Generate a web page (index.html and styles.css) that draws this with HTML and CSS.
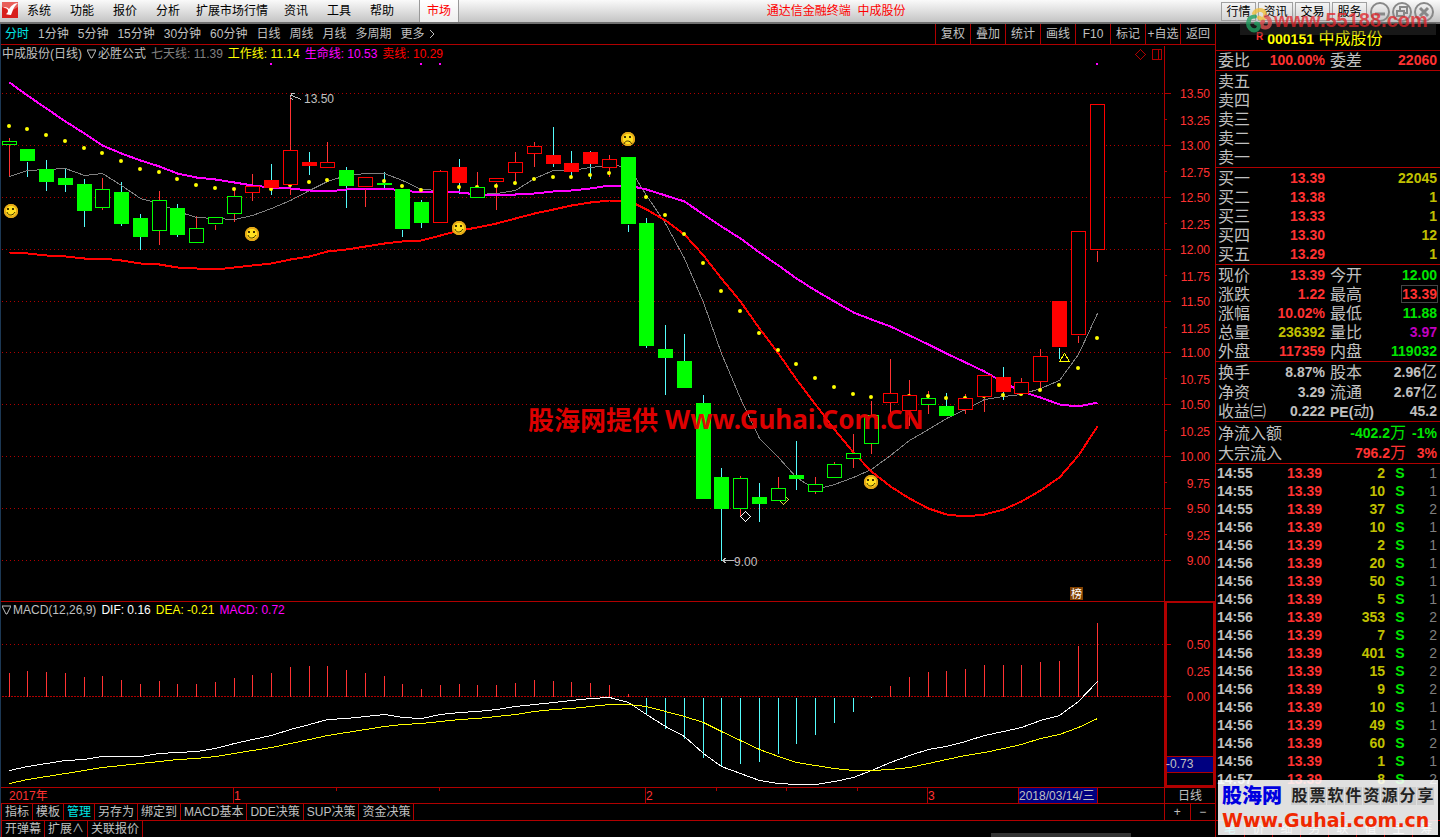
FILE: index.html
```html
<!DOCTYPE html>
<html lang="zh-CN">
<head>
<meta charset="utf-8">
<title>通达信金融终端 中成股份</title>
<link rel="stylesheet" href="styles.css">
</head>
<body>
<header class="menubar">
  <svg class="logo" viewBox="0 0 16 16" aria-hidden="true"><rect width="16" height="16" fill="#d8201c"/><path d="M0 0h16v5L9 9 0 5z" fill="#e8605a"/><path d="M1 5c2 0 4 0 6 2 2-3 5-6 9-6-4 3-5 7-7 12-3 0-5-1-5-1s2-1 2-3c0-3-3-3-5-4z" fill="#fff"/></svg>
  <nav class="menus">
    <button>系统</button><button>功能</button><button>报价</button><button>分析</button><button class="wide">扩展市场行情</button><button>资讯</button><button>工具</button><button>帮助</button>
  </nav>
  <button class="market">市场</button>
  <h1 class="title">通达信金融终端&nbsp; 中成股份</h1>
  <div class="quick"><button>行情</button><button>资讯</button><button>交易</button><button>服务</button></div>
  <div class="winbtns">
    <button aria-label="最小化"><svg viewBox="0 0 20 20"><circle cx="10" cy="10" r="9"/><path d="M5 12h10" class="thick"/></svg></button>
    <button aria-label="还原"><svg viewBox="0 0 20 20"><circle cx="10" cy="10" r="9"/><path d="M8 8V5h7v6h-3M5 9h7v5H5z"/></svg></button>
    <button aria-label="关闭"><svg viewBox="0 0 20 20"><circle cx="10" cy="10" r="9"/><path d="M6 6l8 8M14 6l-8 8" class="thick"/></svg></button>
  </div>
  <div class="stamp-top" aria-hidden="true">
    <div class="stamp-band"></div>
    <svg class="swirl" viewBox="0 0 26 26" fill="none" stroke-width="4" stroke-linecap="round"><path d="M8 6c3-6 13-4 11 3-1 3-4 3-6 1" stroke="#f0c040"/><path d="M20 9c6 3 5 12-1 11-4 0-4-4-2-6" stroke="#e05050"/><path d="M3 13c-3 6 3 12 8 9 3-2 2-6-1-6" stroke="#20a060"/><path d="M9 9c-5 0-7 3-6 6" stroke="#20a060"/></svg>
    <span class="stamp-url">www.55188.com</span>
  </div>
</header>

<main class="terminal">
<section class="left">
  <div class="toolbar">
    <nav class="periods">
      <button class="on">分时</button><button>1分钟</button><button>5分钟</button><button>15分钟</button><button>30分钟</button><button>60分钟</button><button>日线</button><button>周线</button><button>月线</button><button>多周期</button><button class="more">更多<svg viewBox="0 0 6 10"><path d="M1 1l4 4-4 4"/></svg></button>
    </nav>
    <div class="actions"><button>复权</button><button>叠加</button><button>统计</button><button>画线</button><button>F10</button><button>标记</button><button>+自选</button><button>返回</button></div>
  </div>

  <div class="panel">
    <div class="legend"><span>中成股份(日线)</span><svg class="tri" viewBox="0 0 9 10"><path d="M0 1h9L5 9H4z"/></svg><span class="ind">必胜公式</span><span class="c-dim">七天线: 11.39</span><span class="c-yellow">工作线: 11.14</span><span class="c-magenta">生命线: 10.53</span><span class="c-red">卖线: 10.29</span></div>
    <svg class="plot" viewBox="0 45 1215 556" role="img" aria-label="日K线图">
      <defs>
        <g id="face"><circle r="7" fill="#ffe020"/><circle r="6" fill="none" stroke="#e8a818" stroke-width="2"/><circle r="5" fill="#ffe020"/><path d="M-3-3v2M2-3v2" stroke="#403000" stroke-width="2"/></g>
        <g id="smile"><use href="#face"/><path d="M-4 1c1 4 6 4 8 0" fill="none" stroke="#403000"/></g>
        <g id="frown"><use href="#face"/><path d="M-4 5c1-4 6-4 8 0" fill="none" stroke="#403000"/></g>
      </defs>
      <g transform="translate(0 .5)">
        <path class="grid" d="M2 93H1164M2 145H1164M2 197H1164M2 249H1164M2 301H1164M2 352H1164M2 404H1164M2 456H1164M2 508H1164M2 560H1164"/>
      </g>
      <g class="crisp" transform="translate(.5 .5)">
        <path class="frame" d="M1164 45V601M1164 93h6M1164 145h6M1164 197h6M1164 249h6M1164 301h6M1164 352h6M1164 404h6M1164 456h6M1164 508h6M1164 560h6M1164 119h2M1164 171h2M1164 223h2M1164 275h2M1164 327h2M1164 378h2M1164 430h2M1164 482h2M1164 534h2"/>
        <path class="frame" d="M1140 49l5 5-5 5-5-5zM1152 49h9v10h-9zM1158 49v10"/>
        <path class="wick-up" d="M9 137V176M102 177V209M159 190V244M196 215V228M215 224V229M234 189V221M252 173V200M290 95V194M327 141V162M365 187V206M440 169V171M477 171V187M496 182V209M515 151V183M534 141V166M609 154V176M740 475V515M778 476V488M815 476V493M834 461V464M853 433V467M871 400V453M890 358V413M909 379V425M928 390V413M965 393V413M984 397V411M1021 377V382M1040 348V390M1078 335V342M1097 250V261"/>
        <path class="wick-down" d="M27 161V176M46 159V190M65 167V191M84 178V226M121 181V225M140 213V249M177 203V236M271 163V194M309 151V174M346 166V207M384 171V187M402 229V236M421 199V227M459 158V193M553 126V166M571 150V177M590 150V178M628 224V231M646 217V347M665 324V394M684 333V361M703 394V403M721 467V560M759 482V521M796 440V489M946 392V406M1003 366V399M1059 347V358"/>
        <path class="ma7" d="M9 176L27 170 46 169 65 168 84 175 102 173 121 185 140 198 159 203 177 211 196 217 215 218 234 219 252 215 271 208 290 200 309 190 327 181 346 175 365 173 384 173 402 180 421 189 440 190 459 192 477 194 496 193 515 190 534 178 553 170 571 170 590 167 609 165 628 166 646 195 665 223 684 258 703 302 721 353 740 398 759 438 778 457 796 477 815 489 834 484 853 477 871 469 890 455 909 440 928 429 946 418 965 409 984 399 1003 396 1021 394 1040 388 1059 380 1078 354 1097 313"/>
        <path class="life" d="M9 82L27 95 46 108 65 121 84 133 102 145 121 153 140 160 159 166 177 173 196 177 215 179 234 182 252 185 271 187 290 188 309 190 327 191 346 189 365 188 384 188 402 190 421 192 440 191 459 192 477 194 515 194 534 193 553 191 571 190 590 188 609 185 628 185 646 189 665 195 684 201 703 214 721 226 740 238 759 252 778 265 796 278 815 290 834 301 853 312 871 319 890 326 909 335 928 344 946 353 965 362 984 371 1003 382 1021 391 1040 397 1059 404 1078 406 1097 402"/>
        <path class="sell" d="M9 252L27 253 46 255 65 256 84 258 102 258 121 260 140 263 159 264 177 267 196 268 215 269 234 267 252 265 271 263 290 259 309 256 327 251 346 249 365 246 384 243 402 241 421 240 440 235 459 230 477 227 496 223 515 218 534 213 553 209 571 205 590 202 609 200 628 200 646 209 665 220 684 234 703 255 721 278 740 301 759 328 778 353 796 379 815 404 834 429 853 452 871 471 890 486 909 498 928 508 946 514 965 516 984 514 1003 509 1021 501 1040 490 1059 477 1078 455 1097 426"/>
      </g>
      <path class="dots" d="M9 126h0M27 129h0M46 135h0M65 141h0M84 148h0M102 153h0M121 161h0M140 169h0M159 172h0M177 179h0M196 185h0M215 188h0M234 189h0M271 189h0M290 185h0M309 182h0M327 180h0M384 181h0M402 186h0M421 190h0M459 187h0M477 187h0M496 186h0M515 183h0M534 179h0M553 177h0M571 177h0M590 175h0M609 173h0M646 197h0M665 215h0M684 234h0M703 263h0M721 291h0M740 311h0M759 333h0M778 350h0M796 364h0M815 378h0M834 387h0M853 394h0M871 397h0M909 396h0M928 396h0M946 398h0M965 398h0M984 396h0M1003 395h0M1021 394h0M1040 390h0M1059 385h0M1078 368h0M1097 338h0"/>
      <g class="crisp" transform="translate(.5 .5)">
        <path class="mark-buy" d="M783 494l5 5-5 5-5-5z"/>
        <path class="body-down" d="M20 149h14v11h-14zM39 169h14v12h-14zM58 178h14v6h-14zM77 184h14v26h-14zM114 192h14v31h-14zM133 218h14v18h-14zM170 208h14v26h-14zM339 170h14v15h-14zM377 183h14v1h-14zM395 189h14v39h-14zM414 202h14v20h-14zM621 157h14v66h-14zM639 223h14v122h-14zM658 349h14v8h-14zM677 361h14v26h-14zM696 403h14v95h-14zM714 477h14v31h-14zM752 497h14v6h-14zM789 475h14v3h-14zM939 406h14v9h-14z"/>
        <path class="hollow-down" d="M2 141h14v3h-14zM95 189h14v18h-14zM152 200h14v30h-14zM189 228h14v14h-14zM208 217h14v6h-14zM227 196h14v17h-14zM470 187h14v10h-14zM733 478h14v30h-14zM771 488h14v12h-14zM808 484h14v7h-14zM827 464h14v13h-14zM846 453h14v5h-14zM864 415h14v28h-14zM921 398h14v6h-14z"/>
        <path class="body-up" d="M264 180h14v7h-14zM302 162h14v3h-14zM452 167h14v15h-14zM546 155h14v8h-14zM564 163h14v8h-14zM583 152h14v11h-14zM996 377h14v14h-14zM1052 301h14v45h-14z"/>
        <path class="hollow-up" d="M245 186h14v6h-14zM283 150h14v34h-14zM320 162h14v5h-14zM358 177h14v9h-14zM433 171h14v51h-14zM489 178h14v3h-14zM508 162h14v10h-14zM527 146h14v7h-14zM602 159h14v8h-14zM883 393h14v9h-14zM902 395h14v15h-14zM958 398h14v11h-14zM977 375h14v21h-14zM1014 382h14v11h-14zM1033 356h14v25h-14zM1071 231h14v103h-14zM1090 104h14v145h-14z"/>
        <path class="mark-low" d="M745 511l5 5-5 5-5-5z"/>
        <path class="mark-warn" d="M1064 353l5 8h-10z"/>
        <path class="pointer" d="M291 95l10 4M290 97l1-4h3M290 98l3 1M722 560h11M726 557l-4 3 4 3"/>
      </g>
      <path fill="#f0f" d="M270 63h2v2h-2zM420 63h2v2h-2zM439 63h2v2h-2zM1096 63h2v2h-2z"/>
      <use href="#smile" x="11" y="211"/><use href="#smile" x="252" y="234"/><use href="#smile" x="459" y="228"/><use href="#smile" x="871" y="482"/><use href="#frown" x="628" y="139"/>
      <g class="note"><text x="304" y="103">13.50</text><text x="734" y="566">9.00</text></g>
      <rect x="1070" y="587" width="13" height="13" fill="#804000"/><text class="rank" x="1071" y="598">榜</text>
      <g class="scale">
        <text x="1210" y="98">13.50</text><text x="1210" y="125">13.25</text><text x="1210" y="150">13.00</text><text x="1210" y="177">12.75</text><text x="1210" y="202">12.50</text><text x="1210" y="229">12.25</text><text x="1210" y="254">12.00</text><text x="1210" y="281">11.75</text><text x="1210" y="306">11.50</text><text x="1210" y="333">11.25</text><text x="1210" y="357">11.00</text><text x="1210" y="384">10.75</text><text x="1210" y="409">10.50</text><text x="1210" y="436">10.25</text><text x="1210" y="461">10.00</text><text x="1210" y="488">9.75</text><text x="1210" y="513">9.50</text><text x="1210" y="540">9.25</text><text x="1210" y="565">9.00</text>
      </g>
    </svg>
    <div class="stamp-mid"><span class="cn">股海网提供</span><span>Www.Guhai.Com.CN</span></div>
  </div>

  <div class="panel">
    <div class="legend"><svg class="tri" viewBox="0 0 9 10"><path d="M0 1h9L5 9H4z"/></svg><span class="ind">MACD(12,26,9)</span><span class="c-white">DIF: 0.16</span><span class="c-yellow">DEA: -0.21</span><span class="c-magenta">MACD: 0.72</span></div>
    <svg class="plot" viewBox="0 601 1215 186" role="img" aria-label="MACD">
      <g transform="translate(0 .5)">
        <path class="grid" d="M2 644H1164"/><path class="zero" d="M2 696H1164"/>
      </g>
      <g class="crisp" transform="translate(.5 .5)">
        <path class="frame" d="M0 601H1214M1164 601V787M1164 644h6M1164 670h2M1164 696h6"/>
        <path class="wick-up" d="M9 672V696M27 670V696M46 671V696M65 672V696M84 676V696M102 675V696M121 679V696M140 683V696M159 680V696M177 683V696M196 683V696M215 681V696M234 677V696M252 674V696M271 672V696M290 666V696M309 665V696M327 665V696M346 669V696M365 672V696M384 675V696M402 683V696M421 688V696M440 684V696M459 683V696M477 684V696M496 684V696M515 682V696M534 679V696M553 680V696M571 681V696M590 682V696M609 684V696M628 693V696M890 685V696M909 676V696M928 671V696M946 670V696M965 668V696M984 664V696M1003 664V696M1021 664V696M1040 661V696M1059 660V696M1078 645V696M1097 622V696"/>
        <path class="wick-down" d="M646 697V714M665 697V728M684 697V738M703 697V757M721 697V766M740 697V763M759 697V761M778 697V753M796 697V743M815 697V734M834 697V722M853 697V711M871 696V697"/>
        <path class="dif" d="M9 770L27 766 46 763 65 760 84 759 102 756 140 756 159 753 177 752 196 751 215 748 234 743 252 739 271 735 290 729 309 724 327 719 346 718 365 716 384 714 402 717 421 718 440 714 459 712 477 711 496 709 515 706 534 704 553 702 571 700 590 698 609 697 628 702 646 714 665 726 684 736 703 753 721 766 740 773 759 780 778 783 796 784 815 784 834 781 853 777 871 770 890 762 909 755 928 749 946 746 965 741 984 735 1003 731 1021 727 1040 720 1059 715 1078 701 1097 681"/>
        <path class="dea" d="M9 783L27 779 46 776 65 773 84 770 102 767 121 765 140 763 159 761 177 759 196 758 215 756 234 753 252 750 271 747 290 743 309 739 327 735 346 732 365 729 384 726 402 724 421 723 440 721 459 719 477 718 496 716 515 714 534 711 553 709 571 708 590 706 609 704 628 704 646 706 665 711 684 716 703 722 721 731 740 740 759 749 778 756 796 762 815 765 834 768 853 770 871 770 890 769 909 767 928 763 946 759 965 755 984 752 1003 748 1021 744 1040 738 1059 734 1078 727 1097 718"/>
        <rect x="1165" y="756" width="49" height="16" fill="#000080" stroke="#b00000"/>
      </g>
      <rect x="1166" y="602" width="48" height="184" fill="none" stroke="#b00000" stroke-width="2"/>
      <g class="scale"><text x="1210" y="649">0.50</text><text x="1210" y="676">0.25</text><text x="1210" y="701">0.00</text></g>
      <text class="cursor" x="1166" y="768">-0.73</text>
    </svg>
  </div>

  <div class="daterow">
    <svg class="plot" viewBox="0 787 1164 16" role="img" aria-label="日期轴">
      <g class="crisp" transform="translate(.5 .5)">
        <path class="frame" d="M0 787H1164M233 787v16M645 787v16M927 787v16M336 787v3M439 787v3M716 787v3M786 787v3M857 787v3"/>
        <rect x="1018" y="787" width="79" height="16" fill="#000080" stroke="#b00000"/>
      </g>
      <g class="dates"><text x="9" y="800">2017年</text><text x="234" y="800">1</text><text x="646" y="800">2</text><text x="928" y="800">3</text></g>
      <text class="cursor" x="1019" y="800">2018/03/14/三</text>
    </svg>
    <button class="cycle">日线</button>
  </div>
  <div class="tabs">
    <div class="tablist"><button>指标</button><button>模板</button><button class="on">管理</button><button>另存为</button><button>绑定到</button><button>MACD基本</button><button>DDE决策</button><button>SUP决策</button><button>资金决策</button></div>
    <div class="zoomers"><button>+</button><button>−</button></div>
  </div>
  <div class="tabs">
    <div class="tablist"><button>开弹幕</button><button>扩展∧</button><button>关联报价</button></div>
  </div>
  <div class="thumb"></div>
</section>

<aside class="quote">
  <h2 class="stock"><small>R</small><b>000151</b> 中成股份</h2>
  <table class="grid4 ratio"><tr><th>委比</th><td class="c-up">100.00%</td><th>委差</th><td class="c-up">22060</td></tr></table>
  <table class="book"><tr><th>卖五</th><td></td><td></td></tr><tr><th>卖四</th><td></td><td></td></tr><tr><th>卖三</th><td></td><td></td></tr><tr><th>卖二</th><td></td><td></td></tr><tr><th>卖一</th><td></td><td></td></tr></table>
  <table class="book"><tr><th>买一</th><td class="c-up">13.39</td><td class="c-vol">22045</td></tr><tr><th>买二</th><td class="c-up">13.38</td><td class="c-vol">1</td></tr><tr><th>买三</th><td class="c-up">13.33</td><td class="c-vol">1</td></tr><tr><th>买四</th><td class="c-up">13.30</td><td class="c-vol">12</td></tr><tr><th>买五</th><td class="c-up">13.29</td><td class="c-vol">1</td></tr></table>
  <table class="grid4">
    <tr><th>现价</th><td class="c-up">13.39</td><th>今开</th><td class="c-down">12.00</td></tr>
    <tr><th>涨跌</th><td class="c-up">1.22</td><th>最高</th><td class="c-up"><span class="boxed">13.39</span></td></tr>
    <tr><th>涨幅</th><td class="c-up">10.02%</td><th>最低</th><td class="c-down">11.88</td></tr>
    <tr><th>总量</th><td class="c-vol">236392</td><th>量比</th><td class="c-purple">3.97</td></tr>
    <tr><th>外盘</th><td class="c-up">117359</td><th>内盘</th><td class="c-down">119032</td></tr>
  </table>
  <table class="grid4 basics">
    <tr><th>换手</th><td>8.87%</td><th>股本</th><td>2.96<i>亿</i></td></tr>
    <tr><th>净资</th><td>3.29</td><th>流通</th><td>2.67<i>亿</i></td></tr>
    <tr><th>收益㈢</th><td>0.222</td><th><b>PE(</b>动<b>)</b></th><td>45.2</td></tr>
  </table>
  <table class="flow"><tr><th>净流入额</th><td class="c-down">-402.2<i>万</i></td><td class="c-down">-1%</td></tr><tr><th>大宗流入</th><td class="c-up">796.2<i>万</i></td><td class="c-up">3%</td></tr></table>
  <table class="ticks">
    <tr><td>14:55</td><td>13.39</td><td>2</td><td>S</td><td>1</td></tr>
    <tr><td>14:55</td><td>13.39</td><td>10</td><td>S</td><td>1</td></tr>
    <tr><td>14:55</td><td>13.39</td><td>37</td><td>S</td><td>2</td></tr>
    <tr><td>14:56</td><td>13.39</td><td>10</td><td>S</td><td>1</td></tr>
    <tr><td>14:56</td><td>13.39</td><td>2</td><td>S</td><td>1</td></tr>
    <tr><td>14:56</td><td>13.39</td><td>20</td><td>S</td><td>1</td></tr>
    <tr><td>14:56</td><td>13.39</td><td>50</td><td>S</td><td>1</td></tr>
    <tr><td>14:56</td><td>13.39</td><td>5</td><td>S</td><td>1</td></tr>
    <tr><td>14:56</td><td>13.39</td><td>353</td><td>S</td><td>2</td></tr>
    <tr><td>14:56</td><td>13.39</td><td>7</td><td>S</td><td>2</td></tr>
    <tr><td>14:56</td><td>13.39</td><td>401</td><td>S</td><td>2</td></tr>
    <tr><td>14:56</td><td>13.39</td><td>15</td><td>S</td><td>2</td></tr>
    <tr><td>14:56</td><td>13.39</td><td>9</td><td>S</td><td>2</td></tr>
    <tr><td>14:56</td><td>13.39</td><td>10</td><td>S</td><td>1</td></tr>
    <tr><td>14:56</td><td>13.39</td><td>49</td><td>S</td><td>1</td></tr>
    <tr><td>14:56</td><td>13.39</td><td>60</td><td>S</td><td>2</td></tr>
    <tr><td>14:56</td><td>13.39</td><td>1</td><td>S</td><td>1</td></tr>
    <tr><td>14:57</td><td>13.39</td><td>8</td><td>S</td><td>2</td></tr>
  </table>
  <nav class="sidetabs"><button class="on">笔</button><button>价</button><button>细</button><button>势</button><button>联</button><button>值</button><button>主</button><button>筹</button></nav>
  <div class="stamp-bottom">
    <div class="stamp-line"><strong>股海网</strong><span class="slogan"><span>股</span><span>票</span><span>软</span><span>件</span><span>资</span><span>源</span><span>分</span><span>享</span></span></div>
    <div class="stamp-site">Www.Guhai.com.cn</div>
  </div>
</aside>
</main>
</body>
</html>
```
FILE: styles.css
```css
* { box-sizing: border-box; }
body {
  margin: 0;
  background: #000;
  color: #c0c0c0;
  font: 12px/16px "Liberation Sans", "Noto Sans CJK SC", sans-serif;
}
button {
  margin: 0;
  padding: 0;
  border: 0;
  background: none;
  color: inherit;
  font: inherit;
  white-space: nowrap;
}
svg { display: block; }

/* colours */
.c-dim { color: #808080; }
.c-yellow { color: #ff0; }
.c-magenta { color: #f0f; }
.c-red { color: #f00; }
.c-white { color: #fff; }
.c-up { color: #ff3232; }
.c-down { color: #00e600; }
.c-vol { color: #c0c000; }
.c-purple { color: #c000c0; }

/* menu bar */
.menubar {
  position: relative;
  display: flex;
  height: 24px;
  padding-left: 2px;
  background: linear-gradient(#fafafa, #c4c4c4);
  border-bottom: 2px solid #707070;
  color: #000;
}
.logo { width: 16px; height: 16px; margin-top: 2px; }
.menus { display: flex; gap: 1px; }
.menus button { padding: 0 9px; }
.menus .wide { padding: 0 6px; }
.market {
  width: 40px;
  margin-left: 16px;
  border: solid #999;
  border-width: 0 1px;
  background: linear-gradient(#fff, #eee);
  color: #f00;
}
.title {
  flex: 1;
  margin: 0;
  padding-right: 8px;
  color: #f00;
  font: inherit;
  line-height: 22px;
  text-align: center;
}
.quick { display: flex; gap: 2px; padding: 2px 3px 1px 0; }
.quick button {
  width: 35px;
  border: 1px solid #a0a0a0;
  background: linear-gradient(#f4f4f4, #d4d4d4);
}
.winbtns { display: flex; gap: 2px; padding: 1px 6px 0 0; }
.winbtns svg { width: 20px; height: 20px; fill: none; stroke: #888; stroke-width: 2; }
.winbtns .thick { stroke-width: 3; }
.stamp-top { position: absolute; top: 7px; right: 4px; width: 196px; height: 28px; z-index: 2; }
.stamp-band { position: absolute; inset: 16px 0 0 0; background: rgba(60, 60, 60, .4); }
.swirl { position: absolute; left: 6px; top: 0; width: 26px; height: 27px; opacity: .8; }
.stamp-url {
  position: absolute;
  left: 34px;
  top: 0;
  color: rgba(225, 35, 40, .75);
  font: bold 20px/26px "Liberation Sans", sans-serif;
}

/* layout */
.terminal { display: grid; grid-template-columns: minmax(0, 1fr) 225px; }
.left { position: relative; display: flex; flex-direction: column; }
.left::before {
  content: "";
  position: absolute;
  inset: 0 auto 0 0;
  width: 1px;
  background: #1c3854;
  z-index: 1;
}
.toolbar {
  display: flex;
  justify-content: space-between;
  height: 21px;
  border-bottom: 1px solid #b00000;
}
.periods { display: flex; gap: 9px; padding-left: 5px; }
.periods .on, .tabs .on, .sidetabs .on { color: #00e6e6; }
.more { display: flex; align-items: center; gap: 4px; }
.more svg { width: 6px; height: 10px; fill: none; stroke: #c0c0c0; }
.actions { display: flex; }
.actions button { width: 35px; border-left: 1px solid #b00000; }

/* chart panels */
.panel { position: relative; }
.plot { width: 100%; height: auto; }
.legend { position: absolute; top: 1px; left: 2px; display: flex; gap: 5px; }
.legend .ind { margin-left: -3px; }
.legend .tri { width: 9px; height: 10px; margin-top: 3px; fill: none; stroke: #c0c0c0; }
.grid { fill: none; stroke: #b00000; stroke-dasharray: 1 3; }
.zero { fill: none; stroke: #b00000; stroke-dasharray: 2 1; }
.crisp { shape-rendering: crispEdges; }
.crisp path { fill: none; }
.frame { stroke: #b00000; }
.wick-up { stroke: #ff3232; }
.wick-down { stroke: #54fcfc; }
.ma7 { stroke: #808080; }
.life { stroke: #f0f; stroke-width: 2; }
.sell { stroke: #f00; stroke-width: 2; }
.dif { stroke: #fff; }
.dea { stroke: #ff0; }
.dots { fill: none; stroke: #ff0; stroke-width: 4; stroke-linecap: round; }
.crisp .body-down { fill: #0f0; stroke: #0f0; }
.crisp .body-up { fill: #f00; stroke: #f00; }
.crisp .hollow-down { fill: #000; stroke: #0f0; }
.crisp .hollow-up { fill: #000; stroke: #f00; }
.mark-buy { stroke: #e0e040; }
.crisp .mark-low { fill: #000; stroke: #fff; }
.crisp .mark-warn { fill: #000; stroke: #ff0; }
.pointer { stroke: #c0c0c0; }
.note, .cursor { fill: #c0c0c0; }
.scale { fill: #ff3232; text-anchor: end; }
.dates { fill: #ff3232; }
.rank { fill: #fff; font-size: 11px; }
.stamp-mid {
  position: absolute;
  left: 528px;
  top: 356px;
  display: flex;
  align-items: center;
  gap: 7px;
  color: rgba(235, 0, 0, .95);
  font: bold 26px/36px "Noto Sans", "Noto Sans CJK SC", sans-serif;
  white-space: nowrap;
}
.stamp-mid .cn { font-family: "Noto Sans CJK SC", sans-serif; }

/* rows under the chart */
.daterow { display: grid; grid-template-columns: minmax(0, 1fr) 51px; }
.cycle { height: 16px; border: solid #b00000; border-width: 1px 0 0 1px; }
.tabs {
  display: flex;
  justify-content: space-between;
  height: 17px;
  border-top: 1px solid #b00000;
}
.tablist { display: flex; margin-left: 1px; border-left: 1px solid #b00000; }
.tablist button { padding: 0 3px; border-right: 1px solid #b00000; }
.zoomers { display: grid; grid-template-columns: 1fr 1fr; width: 51px; }
.zoomers button { border-left: 1px solid #b00000; }
.thumb { position: absolute; right: 84px; bottom: 0; width: 140px; height: 4px; background: #333; }

/* quote column */
.quote {
  position: relative;
  display: flex;
  flex-direction: column;
  border-left: 1px solid #b00000;
}
.stock {
  height: 27px;
  margin: 0;
  padding-left: 40px;
  border-bottom: 1px solid #b00000;
  color: #ff0;
  font-size: 16px;
  font-weight: normal;
  line-height: 26px;
}
.stock small { margin-right: 4px; color: #ff3232; font-size: 10px; font-weight: bold; vertical-align: 4px; }
.stock b { font-size: 14px; }
.quote table {
  width: 100%;
  border-collapse: collapse;
  table-layout: fixed;
  border-bottom: 1px solid #b00000;
}
.quote th, .quote td { height: 19px; padding: 0; line-height: 19px; white-space: nowrap; }
.quote tr:first-child > * { height: 20px; padding-top: 1px; }
.quote .ratio tr > * { height: 19px; padding-top: 0; }
.quote .basics tr:first-child > * { padding-top: 0; }
.quote th { padding-left: 2px; font-size: 16px; font-weight: normal; text-align: left; }
.quote th b { font-size: 14px; line-height: 16px; }
.quote td { font-size: 14px; font-weight: bold; text-align: right; }
.quote td:last-child { padding-right: 3px; }
.quote td i { font-size: 16px; font-style: normal; font-weight: normal; }
.grid4 th { width: 52px; }
.grid4 td:nth-child(2) { width: 57px; }
.grid4 th:nth-child(3) { padding-left: 5px; }
.book th { width: 52px; }
.book td:nth-child(2) { width: 57px; }
.flow th { width: 70px; }
.flow td:nth-child(2) { width: 120px; }
.boxed { outline: 1px solid #444; }
.quote .ticks { border: 0; }
.quote .ticks tr > td { height: 18px; padding-top: 0; line-height: 18px; }
.quote .ticks td:nth-child(1) { width: 46px; padding-left: 1px; text-align: left; }
.ticks td:nth-child(2) { width: 60px; color: #ff3232; }
.ticks td:nth-child(3) { width: 63px; color: #c0c000; }
.quote .ticks td:nth-child(4) { width: 30px; color: #00e600; text-align: center; }
.ticks td:nth-child(5) { color: #808080; }
.quote .ticks td:last-child { font-weight: normal; }
.sidetabs {
  display: grid;
  grid-template-columns: repeat(8, 1fr);
  height: 17px;
  margin-top: auto;
  border-top: 1px solid #b00000;
}
.sidetabs button + button { border-left: 1px solid #b00000; }
.stamp-bottom {
  position: absolute;
  right: 2px;
  bottom: 2px;
  width: 220px;
  height: 55px;
  padding: 3px 4px;
  background: rgba(255, 255, 255, .88);
}
.stamp-line { display: flex; align-items: center; justify-content: space-between; height: 26px; }
.stamp-line strong { color: #0000e0; font-size: 20px; font-weight: 900; }
.slogan { display: flex; gap: 1px; }
.slogan span { width: 17px; background: #ccc; color: #222; font-size: 16px; font-weight: bold; line-height: 18px; text-align: center; }
.stamp-site { color: #f02800; font: bold 19px/22px "DejaVu Sans", sans-serif; white-space: nowrap; }
```
